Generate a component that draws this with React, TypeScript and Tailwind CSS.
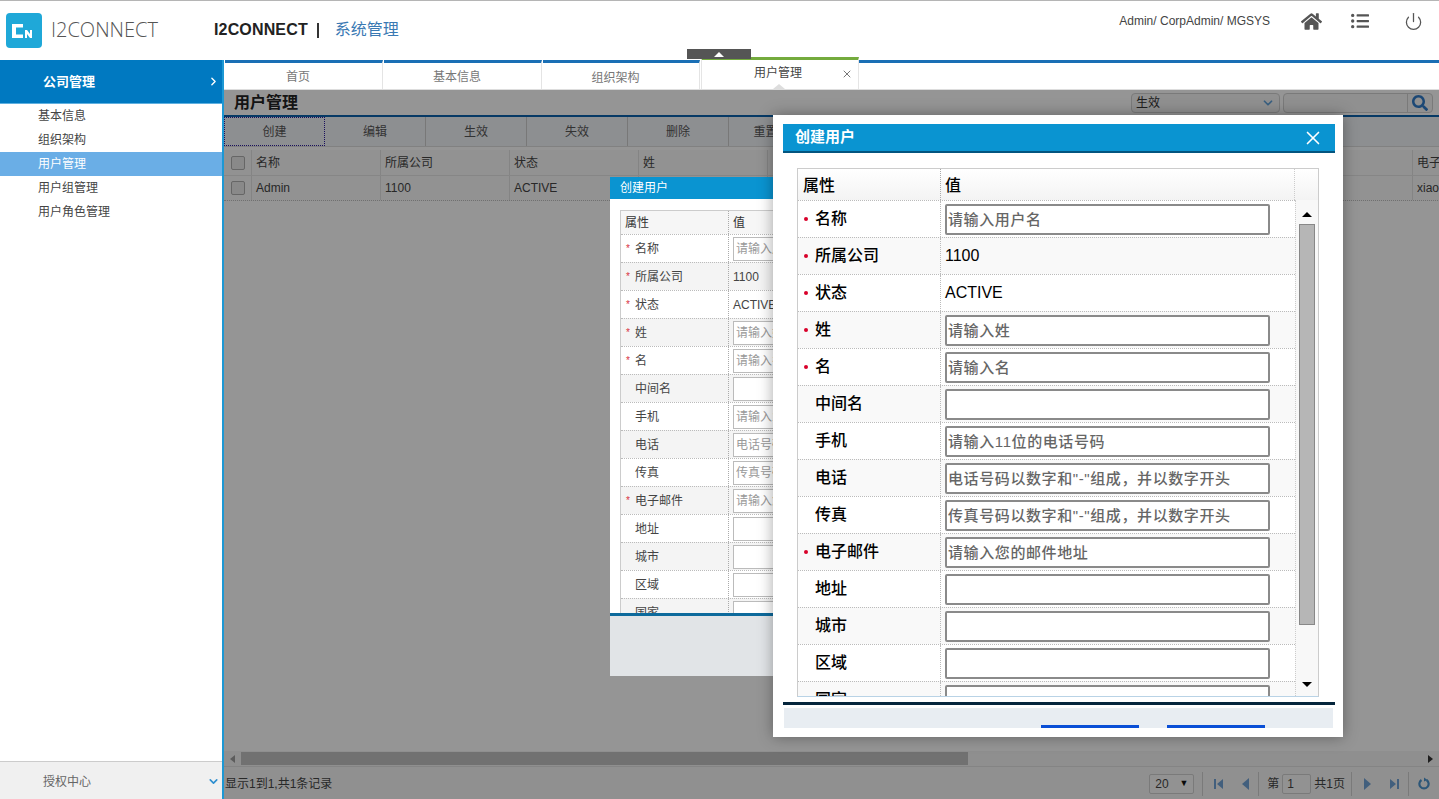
import React from "react";
import { FaHome, FaListUl, FaSearch } from "react-icons/fa";
import { Power, ChevronRight, ChevronDown, X } from "lucide-react";

const font = { fontFamily: '"Liberation Sans", "Noto Sans CJK SC", sans-serif' };

type Row = { label: string; req?: boolean; text?: string; ph?: string };
const rows: Row[] = [
  { label: "名称", req: true, ph: "请输入用户名" },
  { label: "所属公司", req: true, text: "1100" },
  { label: "状态", req: true, text: "ACTIVE" },
  { label: "姓", req: true, ph: "请输入姓" },
  { label: "名", req: true, ph: "请输入名" },
  { label: "中间名", ph: "" },
  { label: "手机", ph: "请输入11位的电话号码" },
  { label: "电话", ph: '电话号码以数字和"-"组成，并以数字开头' },
  { label: "传真", ph: '传真号码以数字和"-"组成，并以数字开头' },
  { label: "电子邮件", req: true, ph: "请输入您的邮件地址" },
  { label: "地址", ph: "" },
  { label: "城市", ph: "" },
  { label: "区域", ph: "" },
  { label: "国家", ph: "" },
];

function Header() {
  return (
    <header className="h-[60px] shrink-0 flex items-start border-t border-[#b5b5b5] bg-white relative">
      <div className="ml-[6px] mt-[12px] w-[36px] h-[35px] rounded-[4px] bg-[#1fa8d8] flex items-center justify-center">
        <svg width="24" height="14" viewBox="0 0 24 14">
          <path d="M0 0h11v3.5H4v7h7V14H0z" fill="#fff" />
          <path d="M13 6h2l3 4V6h2v8h-2l-3-4v4h-2z" fill="#fff" />
        </svg>
      </div>
      <div className="ml-[9px] mt-[16px] text-[20px] leading-[26px] text-[#555] font-light" style={{ fontFamily: '"Open Sans", sans-serif' }}>I2CONNECT</div>
      <div className="absolute left-[214px] top-[19px] flex items-center text-[16px] leading-[20px]">
        <span className="font-bold text-[#222] tracking-[0.15px]">I2CONNECT</span>
        <span className="ml-[9px] w-[2px] h-[15px] bg-[#333]" />
        <span className="ml-[16px] -mt-[1px] text-[#3a79b3]">系统管理</span>
      </div>
      <div className="ml-auto flex items-center mt-[10px] h-[20px]">
        <span className="text-[12px] text-[#444] mr-[31px]">Admin/ CorpAdmin/ MGSYS</span>
        <FaHome className="text-[#555] mr-[29px]" size={21} />
        <FaListUl className="text-[#555] mr-[35px]" size={18} />
        <Power className="text-[#555] mr-[16px]" size={19} strokeWidth={1.6} />
      </div>
    </header>
  );
}

function Sidebar() {
  const items = ["基本信息", "组织架构", "用户管理", "用户组管理", "用户角色管理"];
  return (
    <aside className="w-[224px] shrink-0 flex flex-col bg-white border-r-2 border-[#1d98d4]">
      <div className="h-[44px] bg-[#0079c1] border-b border-[#5fb0e0] flex items-center pl-[43px] pr-[2px] text-white">
        <span className="text-[13px] font-bold flex-1">公司管理</span>
        <ChevronRight size={13} strokeWidth={2.5} />
      </div>
      <ul className="text-[12px]">
        {items.map((t, i) => (
          <li key={t} className={"h-[24px] leading-[24px] pl-[38px] " + (i === 2 ? "bg-[#6aaee6] text-white" : "text-[#444]")}>{t}</li>
        ))}
      </ul>
      <div className="mt-auto h-[38px] bg-[#f0f0f0] border-t border-[#ccc] flex items-center pl-[43px] pr-[2px] pt-[2px] text-[#666]">
        <span className="text-[12px] flex-1">授权中心</span>
        <ChevronDown size={13} strokeWidth={3} className="text-[#2f8fd0]" />
      </div>
    </aside>
  );
}

function Tabs() {
  const tab = "h-[29px] mr-[1px] bg-white border-t-[3px] border-r border-r-[#e4e4e4] border-t-[#1a6fb5] flex items-center justify-center text-[12px] text-[#777] pr-[11px]";
  return (
    <div className="h-[30px] shrink-0 relative border-b border-[#ddd] bg-white pl-[1px]">
      <div className="flex relative h-full">
        <div className={tab + " w-[158px] pt-[1px]"}>首页</div>
        <div className={tab + " w-[158px] pt-[1px]"}>基本信息</div>
        <div className={tab + " w-[157px] pt-[3px]"}>组织架构</div>
        <div className="w-[158px] shrink-0 h-[32px] -mt-[3px] bg-white border-t-[3px] border-[#74ab3d] border-x border-x-[#e5e5e5] flex items-center justify-center text-[12px] text-[#444] relative pb-[3px] pr-[4px]">
          用户管理
          <X size={12} className="absolute right-[5px] top-[8px] text-[#777]" />
          <span className="absolute left-[71px] bottom-0 w-0 h-0 border-x-[6px] border-x-transparent border-b-[5px] border-b-[#ddd]" />
        </div>
        <div className="flex-1 h-[3px] bg-[#1a6fb5]" />
      </div>
      <div className="absolute left-[463px] -top-[11px] w-[64px] h-[10px] bg-[#555] flex items-center justify-center">
        <span className="w-0 h-0 border-x-[5px] border-x-transparent border-b-[5px] border-b-white" />
      </div>
    </div>
  );
}

function Toolbar() {
  const btns = ["创建", "编辑", "生效", "失效", "删除", "重置"];
  return (
    <div className="h-[30px] flex bg-[#eceef2] border-b border-[#d8d8d8] text-[12px] text-[#555]">
      {btns.map((b, i) => (
        <div key={b} className={i === 0 ? "w-[101px] flex items-center justify-center border border-dotted border-[#2a1a9a]" : i === 5 ? "w-[101px] flex items-center justify-center pr-[28px]" : "w-[101px] flex items-center justify-center border-r border-[#c8c8c8]"}>{b}</div>
      ))}
    </div>
  );
}

function Grid() {
  const heads = ["名称", "所属公司", "状态", "姓", "", "", "", "", "", "电子邮件"];
  const vals = ["Admin", "1100", "ACTIVE", "", "", "", "", "", "", "xiaoming@126.com"];
  const box = <span className="block w-[14px] h-[14px] rounded-[2px] border border-[#aaa] bg-[#e4e4e4]" />;
  return (
    <div className="mt-[3px] w-[1400px] text-[12px] text-[#444]">
      <div className="flex h-[26px] bg-[#f3f3f3] border-b border-[#e0e0e0]">
        <div className="w-[28px] shrink-0 flex items-center justify-center border-r border-[#ddd]">{box}</div>
        {heads.map((h, i) => <div key={i} className="w-[129px] shrink-0 flex items-center pl-[4px] border-r border-[#ddd]">{h}</div>)}
      </div>
      <div className="flex h-[25px] bg-[#f3f3f3] border-b border-dotted border-[#bbb]">
        <div className="w-[28px] shrink-0 flex items-center justify-center border-r border-[#ddd]">{box}</div>
        {vals.map((h, i) => <div key={i} className="w-[129px] shrink-0 flex items-center pl-[4px] border-r border-[#ddd] whitespace-nowrap">{h}</div>)}
      </div>
    </div>
  );
}

function Tri({ dir, bar }: { dir: "l" | "r"; bar?: boolean }) {
  return (
    <svg width="11" height="12" viewBox="0 0 11 12" fill="#6f9fd0">
      {dir === "l" ? <path d={bar ? "M1 1h2v10H1zM10 1v10L4 6z" : "M9 0v12L2 6z"} /> : <path d={bar ? "M8 1h2v10H8zM1 1v10l6-5z" : "M2 0v12l7-6z"} />}
    </svg>
  );
}

function Pager() {
  const sep = <span className="block w-px h-[24px] bg-[#ccc]" />;
  return (
    <div className="h-[33px] shrink-0 flex items-center border-t border-[#ddd] bg-[#f0f0f0] pt-[1px] text-[12px] text-[#444]">
      <span className="pl-[1px]">显示1到1,共1条记录</span>
      <div className="ml-auto flex items-center">
        <div className="w-[45px] h-[20px] border border-[#ccc] rounded-[2px] bg-[#f4f4f4] flex items-center justify-between px-[5px]">
          <span>20</span><span className="text-[9px] text-[#111]">▼</span>
        </div>
        <span className="ml-[8px]">{sep}</span>
        <span className="ml-[10px] flex"><Tri dir="l" bar /></span>
        <span className="ml-[16px] flex"><Tri dir="l" /></span>
        <span className="ml-[7px] flex">{sep}</span>
        <span className="ml-[8px]">第</span>
        <span className="ml-[3px] w-[29px] h-[20px] border border-[#ccc] rounded-[2px] bg-[#f4f4f4] pl-[4px] leading-[18px]">1</span>
        <span className="ml-[3px]">共1页</span>
        <span className="ml-[6px] flex">{sep}</span>
        <span className="ml-[10px] flex"><Tri dir="r" /></span>
        <span className="ml-[16px] flex"><Tri dir="r" bar /></span>
        <span className="ml-[8px] flex">{sep}</span>
        <svg className="ml-[9px] mr-[9px]" width="12" height="13" viewBox="0 0 12 13" fill="none" stroke="#4a90c8" strokeWidth="2.2"><path d="M8.5 3a4.6 4.6 0 1 1-5 0" /><path d="M6 .5l3.5 2.6L6 4.5z" fill="#4a90c8" stroke="none" /></svg>
      </div>
    </div>
  );
}

function SmallDialog() {
  return (
    <div className="absolute left-[386px] top-[87px] w-[400px] h-[499px] bg-white flex flex-col">
      <div className="h-[22px] shrink-0 bg-[#0a94d1] text-white text-[12px] leading-[22px] pl-[10px]">创建用户</div>
      <div className="mx-[10px] mt-[11px] h-[403px] shrink-0 overflow-hidden border-x border-t border-[#ccc] text-[12px] text-[#444]">
        <div className="flex h-[23px] bg-[#f6f6f6] text-[#333]">
          <div className="w-[108px] pl-[4px] flex items-center border-r border-dotted border-[#aaa]">属性</div>
          <div className="flex-1 pl-[4px] flex items-center">值</div>
        </div>
        {rows.map((r, i) => (
          <div key={r.label} className={"flex h-[28px] border-t border-dotted border-[#bbb] " + (i % 2 ? "bg-[#f4f4f4]" : "bg-white")}>
            <div className="w-[108px] flex items-center border-r border-dotted border-[#aaa] relative pl-[14px]">
              {r.req && <span className="absolute left-[5px] text-[#d9323f] text-[10px]">*</span>}
              {r.label}
            </div>
            <div className="flex-1 flex items-center pl-[4px]">
              {r.text ? <span>{r.text}</span> : <input readOnly placeholder={r.ph} className="w-[200px] h-[24px] border border-[#bbb] bg-white px-[2px] text-[12px] placeholder:text-[#999]" />}
            </div>
          </div>
        ))}
      </div>
      <div className="h-[3px] shrink-0 bg-[#0d6a9c]" />
      <div className="flex-1 bg-[#e1e4e7]" />
    </div>
  );
}

function LargeDialog() {
  return (
    <div className="absolute left-[773px] top-[115px] w-[570px] h-[622px] bg-white shadow-[0_0_14px_rgba(0,0,0,0.35)] flex flex-col items-stretch overflow-hidden">
      <div className="mt-[9px] ml-[10px] mr-[8px] h-[29px] shrink-0 bg-[#0a94d1] border-b-2 border-[#04557f] text-white text-[15px] font-bold flex items-center pl-[12px] pr-[11px] justify-between">
        <span>创建用户</span>
        <X size={22} strokeWidth={1.8} />
      </div>
      <div className="mx-[24px] mt-[15px] h-[529px] shrink-0 overflow-hidden border border-[#ccc] border-b-[#b9d3e6] text-[16px] font-medium text-black relative">
        <div className="flex h-[31px] bg-gradient-to-b from-white to-[#f3f3f3]">
          <div className="w-[143px] pl-[5px] pt-[2px] flex items-center border-r border-dotted border-[#aaa]">属性</div>
          <div className="w-[354px] pl-[4px] pt-[2px] flex items-center border-r border-dotted border-[#ccc]">值</div>
          <div className="flex-1" />
        </div>
        <div className="flex">
          <div className="w-[497px]">
            {rows.map((r, i) => (
              <div key={r.label} className={"flex h-[37px] border-t border-dotted border-[#bbb] " + (i % 2 ? "bg-[#f9f9f9]" : "bg-white")}>
                <div className="w-[143px] shrink-0 flex items-center border-r border-dotted border-[#bbb] relative pl-[17px]">
                  {r.req && <span className="absolute left-[6px] w-[4px] h-[4px] rounded-full bg-[#d8002a]" />}
                  {r.label}
                </div>
                <div className="flex-1 flex items-center pl-[4px]">
                  {r.text ? <span>{r.text}</span> : <input readOnly placeholder={r.ph} className="w-[325px] h-[31px] border-2 border-[#8a8a8a] rounded-[2px] bg-white px-[1px] text-[15px] tracking-[0.6px] placeholder:text-[#666]" />}
                </div>
              </div>
            ))}
          </div>
          <div className="flex-1 border-l border-dotted border-[#ccc] bg-[#f8f8f8] flex flex-col items-center relative">
            <span className="mt-[12px] w-0 h-0 border-x-[5px] border-x-transparent border-b-[5px] border-b-black" />
            <div className="mt-[7px] w-[16px] h-[401px] bg-[#b6b6b6] border border-[#888]" />
            <span className="mt-[57px] w-0 h-0 border-x-[5px] border-x-transparent border-t-[5px] border-t-black" />
          </div>
        </div>
      </div>
      <div className="ml-[10px] mr-[8px] h-[3px] shrink-0 bg-[#04253c] mt-[5px]" />
      <div className="ml-[11px] mr-[10px] mt-[3px] h-[20px] shrink-0 bg-[#e8edf2] flex items-end pl-[257px] gap-[28px]">
        <div className="w-[98px] h-[3px] bg-[#0a4fd6]" />
        <div className="w-[98px] h-[3px] bg-[#0a4fd6]" />
      </div>
    </div>
  );
}

export default function App() {
  return (
    <div className="w-[1439px] h-[799px] overflow-hidden flex flex-col bg-white relative" style={font}>
      <Header />
      <div className="flex-1 flex min-h-0">
        <Sidebar />
        <main className="flex-1 min-w-0 flex flex-col">
          <Tabs />
          <div className="flex-1 min-h-0 flex flex-col relative overflow-hidden bg-[#f8f8f8]">
            <div className="h-[27px] shrink-0 flex items-center bg-[#f8f8f8] border-b-2 border-[#0a5fa8] pl-[10px] pr-[6px]">
              <span className="text-[16px] font-bold text-[#222] flex-1">用户管理</span>
              <div className="w-[149px] h-[20px] rounded-[4px] border border-[#ccc] bg-[#f0f0f0] text-[12px] text-[#333] flex items-center justify-between pl-[4px] pr-[4px]">
                <span>生效</span><ChevronDown size={14} strokeWidth={3} className="text-[#5f9fd6]" />
              </div>
              <div className="ml-[3px] w-[150px] h-[20px] rounded-[4px] border border-[#ccc] bg-[#f0f0f0] flex justify-end items-center">
                <div className="w-[25px] h-full border-l border-[#ccc] flex items-center justify-center"><FaSearch size={16} className="text-[#2f78c4]" /></div>
              </div>
            </div>
            <Toolbar />
            <div className="flex-1 min-h-0 overflow-hidden bg-[#f8f8f8]"><Grid /></div>
            <div className="h-[15px] shrink-0 flex items-center bg-[#efefef] relative">
              <span className="ml-[6px] w-0 h-0 border-y-[4px] border-y-transparent border-r-[5px] border-r-[#999]" />
              <div className="ml-[6px] w-[727px] h-[13px] bg-[#bdbdbd]" />
              <span className="ml-auto mr-[6px] w-0 h-0 border-y-[4px] border-y-transparent border-l-[5px] border-l-[#333]" />
            </div>
            <Pager />
            <div className="absolute inset-0 bg-black/[0.4]" />
            <SmallDialog />
          </div>
        </main>
      </div>
      <LargeDialog />
    </div>
  );
}
